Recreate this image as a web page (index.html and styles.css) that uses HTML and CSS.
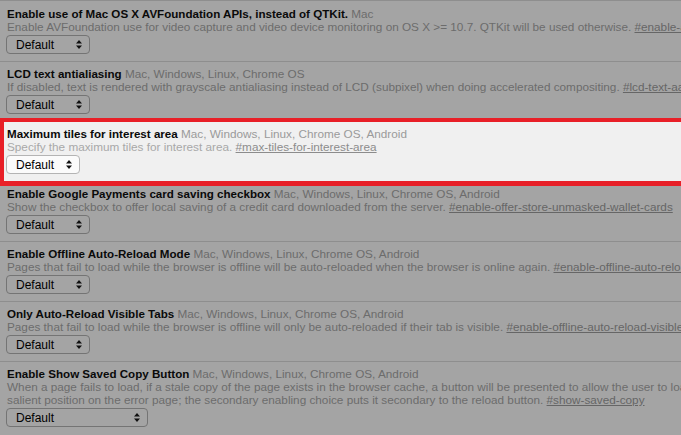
FILE: index.html
```html
<!DOCTYPE html>
<html>
<head>
<meta charset="utf-8">
<link rel="stylesheet" href="styles.css">
</head>
<body>
<div class="list">
  <div class="flag">
    <div class="name">Enable use of Mac OS X AVFoundation APIs, instead of QTKit. <span class="platforms">Mac</span></div>
    <div class="desc">Enable AVFoundation use for video capture and video device monitoring on OS X &gt;= 10.7. QTKit will be used otherwise. <a class="link">#enable-avfoundation</a></div>
    <div class="select"><span>Default</span><svg class="arrows" width="6" height="9" viewBox="0 0 6 9"><path d="M3 0L6 3.5H0Z M3 9L6 5.5H0Z"/></svg></div>
  </div>
  <div class="flag">
    <div class="name">LCD text antialiasing <span class="platforms">Mac, Windows, Linux, Chrome OS</span></div>
    <div class="desc">If disabled, text is rendered with grayscale antialiasing instead of LCD (subpixel) when doing accelerated compositing. <a class="link">#lcd-text-aa</a></div>
    <div class="select"><span>Default</span><svg class="arrows" width="6" height="9" viewBox="0 0 6 9"><path d="M3 0L6 3.5H0Z M3 9L6 5.5H0Z"/></svg></div>
  </div>
  <div class="flag highlight">
    <div class="name">Maximum tiles for interest area <span class="platforms">Mac, Windows, Linux, Chrome OS, Android</span></div>
    <div class="desc">Specify the maximum tiles for interest area. <a class="link">#max-tiles-for-interest-area</a></div>
    <div class="select narrow"><span>Default</span><svg class="arrows" width="6" height="9" viewBox="0 0 6 9"><path d="M3 0L6 3.5H0Z M3 9L6 5.5H0Z"/></svg></div>
  </div>
  <div class="flag">
    <div class="name">Enable Google Payments card saving checkbox <span class="platforms">Mac, Windows, Linux, Chrome OS, Android</span></div>
    <div class="desc">Show the checkbox to offer local saving of a credit card downloaded from the server. <a class="link">#enable-offer-store-unmasked-wallet-cards</a></div>
    <div class="select"><span>Default</span><svg class="arrows" width="6" height="9" viewBox="0 0 6 9"><path d="M3 0L6 3.5H0Z M3 9L6 5.5H0Z"/></svg></div>
  </div>
  <div class="flag">
    <div class="name">Enable Offline Auto-Reload Mode <span class="platforms">Mac, Windows, Linux, Chrome OS, Android</span></div>
    <div class="desc">Pages that fail to load while the browser is offline will be auto-reloaded when the browser is online again. <a class="link">#enable-offline-auto-reload</a></div>
    <div class="select"><span>Default</span><svg class="arrows" width="6" height="9" viewBox="0 0 6 9"><path d="M3 0L6 3.5H0Z M3 9L6 5.5H0Z"/></svg></div>
  </div>
  <div class="flag">
    <div class="name">Only Auto-Reload Visible Tabs <span class="platforms">Mac, Windows, Linux, Chrome OS, Android</span></div>
    <div class="desc">Pages that fail to load while the browser is offline will only be auto-reloaded if their tab is visible. <a class="link">#enable-offline-auto-reload-visible-only</a></div>
    <div class="select"><span>Default</span><svg class="arrows" width="6" height="9" viewBox="0 0 6 9"><path d="M3 0L6 3.5H0Z M3 9L6 5.5H0Z"/></svg></div>
  </div>
  <div class="flag">
    <div class="name">Enable Show Saved Copy Button <span class="platforms">Mac, Windows, Linux, Chrome OS, Android</span></div>
    <div class="desc">When a page fails to load, if a stale copy of the page exists in the browser cache, a button will be presented to allow the user to load that stale copy. The primary enabling choice puts the button in the most salient position on the error page; the secondary enabling choice puts it secondary to the reload button. <a class="link">#show-saved-copy</a></div>
    <div class="select wide"><span>Default</span><svg class="arrows" width="6" height="9" viewBox="0 0 6 9"><path d="M3 0L6 3.5H0Z M3 9L6 5.5H0Z"/></svg></div>
  </div>
</div>
</body>
</html>
```
FILE: styles.css
```css
html {
  overflow: hidden;
  background: #a4a4a4;
}
body {
  margin: 0;
  font-family: "Liberation Sans", Arial, sans-serif;
  color: #0a0a0a;
}
.list {
  width: 1100px;
  border-top: 1px solid #8e8e8e;
}
.flag {
  border-top: 1px solid #8e8e8e;
  padding: 5px 7px 7px;
}
.flag:first-child {
  border-top: none;
  padding-top: 6px;
}
.name {
  font-size: 11.6px;
  line-height: 13px;
  height: 13px;
  font-weight: bold;
  white-space: nowrap;
}
.platforms {
  font-weight: normal;
  font-size: 11.75px;
  color: #6c6c6c;
}
.desc {
  font-size: 11.75px;
  line-height: 13px;
  color: #6c6c6c;
}
.link {
  color: #666;
  text-decoration: underline;
}
.select {
  margin: 2px 0 0 -1px;
  width: 84px;
  height: 19px;
  box-sizing: border-box;
  border: 1px solid #747474;
  border-radius: 4px;
  display: flex;
  align-items: center;
  justify-content: space-between;
  padding: 0 7px 0 9px;
  font-size: 12px;
  line-height: 14px;
  color: #000;
}
.select.narrow { width: 74px; }
.select.wide { width: 142px; }
.arrows { fill: #111; }
.highlight {
  position: relative;
  z-index: 1;
}
.highlight::before {
  content: "";
  position: absolute;
  z-index: -1;
  top: -4px;
  left: 0;
  right: 0;
  bottom: -5px;
  border-style: solid;
  border-color: #e81f27;
  border-width: 4px 6px 5px 4px;
  background: #f0f0f0;
}
.highlight .platforms { color: #9a9a9a; }
.highlight .desc { color: #a8a8a8; }
.highlight .link { color: #8c8c8c; }
.highlight .select {
  background: #fbfbfb;
  border-color: #b4b4b4;
}
```
